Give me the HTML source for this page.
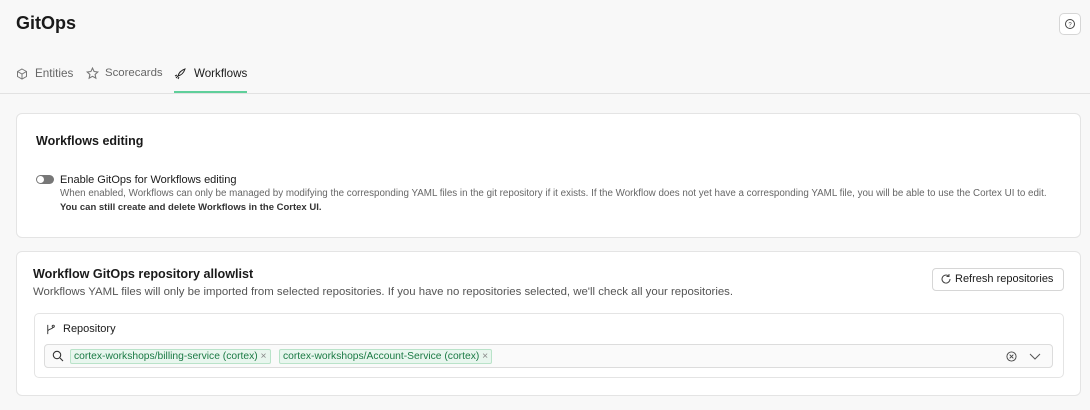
<!DOCTYPE html><html><head><style>
*{box-sizing:border-box;margin:0;padding:0}
body{width:1090px;height:410px;background:#f8f8f8;font-family:"Liberation Sans",sans-serif;color:#1a1a1a;position:relative;overflow:hidden}
.a{position:absolute;white-space:nowrap}
.card{position:absolute;background:#fff;border:1px solid #e4e4e4;border-radius:6px}
.chip{position:absolute;top:4px;height:15px;background:#e8f6ee;border:1px solid #b9e3c9;color:#1b7a44;font-size:10.3px;line-height:13px;padding:0 3px;border-radius:2px}
</style></head><body>
<div class="a" style="left:16px;top:13px;font-size:18px;font-weight:bold">GitOps</div>
<div class="a" style="left:1059px;top:13px;width:22px;height:22px;border:1px solid #d6d6d6;border-radius:5px;background:#fff"><svg width="20" height="20" viewBox="0 0 20 20"><circle cx="10" cy="10" r="4.5" fill="none" stroke="#444" stroke-width="1"/><text x="10" y="12.5" font-size="6" text-anchor="middle" fill="#444" font-family="Liberation Sans">?</text></svg></div>
<svg class="a" style="left:16px;top:68px" width="12" height="12" viewBox="0 0 12 12" fill="none" stroke="#777" stroke-width="1"><path d="M6 1l4.5 2.5v5L6 11 1.5 8.5v-5z M1.5 3.5L6 6l4.5-2.5 M6 6v5"/></svg>
<div class="a" style="left:35px;top:67px;font-size:11.7px;color:#666">Entities</div>
<svg class="a" style="left:86px;top:67px" width="13" height="13" viewBox="0 0 12 12" fill="none" stroke="#777" stroke-width="1"><path d="M6 1l1.5 3.2 3.4.4-2.5 2.3.7 3.4L6 8.6 2.9 10.3l.7-3.4L1.1 4.6l3.4-.4z"/></svg>
<div class="a" style="left:105px;top:67px;font-size:11.4px;color:#666">Scorecards</div>
<svg class="a" style="left:174px;top:68px" width="12" height="12" viewBox="0 0 12 12" fill="none" stroke="#222" stroke-width="1"><path d="M4 8l-2 2M5 9l-1 2M3 7L1 8M4 8c1-4 4-6 7-7-1 3-3 6-7 7z"/></svg>
<div class="a" style="left:194px;top:67px;font-size:11.6px;color:#1a1a1a">Workflows</div>
<div class="a" style="left:174px;top:91px;width:73px;height:2px;background:#5fcf9a"></div>
<div class="a" style="left:0;top:93px;width:1090px;height:1px;background:#e2e2e2"></div>

<div class="card" style="left:16px;top:113px;width:1065px;height:125px"></div>
<div class="a" style="left:36px;top:134px;font-size:12.5px;font-weight:bold">Workflows editing</div>
<div class="a" style="left:36px;top:175px;width:18px;height:9px;border-radius:5px;background:#777"><div style="position:absolute;left:1px;top:1px;width:7px;height:7px;border-radius:50%;background:#fff"></div></div>
<div class="a" style="left:60px;top:174px;font-size:11px">Enable GitOps for Workflows editing</div>
<div class="a" style="left:60px;top:188px;font-size:9.8px;color:#666">When enabled, Workflows can only be managed by modifying the corresponding YAML files in the git repository if it exists. If the Workflow does not yet have a corresponding YAML file, you will be able to use the Cortex UI to edit.</div>
<div class="a" style="left:60px;top:202px;font-size:9.5px;color:#333;font-weight:bold">You can still create and delete Workflows in the Cortex UI.</div>

<div class="card" style="left:16px;top:251px;width:1065px;height:145px"></div>
<div class="a" style="left:33px;top:267px;font-size:12.6px;font-weight:bold">Workflow GitOps repository allowlist</div>
<div class="a" style="left:33px;top:286px;font-size:11.4px;color:#555">Workflows YAML files will only be imported from selected repositories. If you have no repositories selected, we'll check all your repositories.</div>
<div class="a" style="left:932px;top:268px;width:132px;height:23px;border:1px solid #d6d6d6;border-radius:4px;background:#fff;font-size:11px;line-height:21px;padding-left:22px">Refresh repositories</div>
<svg class="a" style="left:940px;top:273px" width="12" height="12" viewBox="0 0 12 12" fill="none" stroke="#444" stroke-width="1"><path d="M10 6a4 4 0 1 1-1.2-2.8M9 1v2.5H6.5"/></svg>
<div class="card" style="left:34px;top:313px;width:1030px;height:65px;border-radius:5px"></div>
<svg class="a" style="left:45px;top:324px" width="11" height="11" viewBox="0 0 12 12" fill="none" stroke="#333" stroke-width="1"><path d="M3 1v10M3 8c0-3 6-2 6-5"/><circle cx="9" cy="2.5" r="1.2"/></svg>
<div class="a" style="left:63px;top:323px;font-size:11px">Repository</div>
<div class="a" style="left:44px;top:344px;width:1009px;height:24px;border:1px solid #dcdcdc;border-radius:4px;background:#fafafa">
<svg style="position:absolute;left:7px;top:5px" width="12" height="12" viewBox="0 0 12 12" fill="none" stroke="#333" stroke-width="1.1"><circle cx="5" cy="5" r="3.7"/><path d="M8 8l3 3"/></svg>
<div class="chip" style="left:25px">cortex-workshops/billing-service (cortex) <span style="color:#888">×</span></div>
<div class="chip" style="left:234px">cortex-workshops/Account-Service (cortex) <span style="color:#888">×</span></div>
<svg style="position:absolute;left:961px;top:6px" width="11" height="11" viewBox="0 0 12 12" fill="none" stroke="#444" stroke-width="1"><circle cx="6" cy="6" r="5"/><path d="M4 4l4 4M8 4l-4 4"/></svg>
<svg style="position:absolute;left:984px;top:7px" width="12" height="9" viewBox="0 0 12 9" fill="none" stroke="#555" stroke-width="1"><path d="M1 2l5 5 5-5"/></svg>
</div>
</body></html>
